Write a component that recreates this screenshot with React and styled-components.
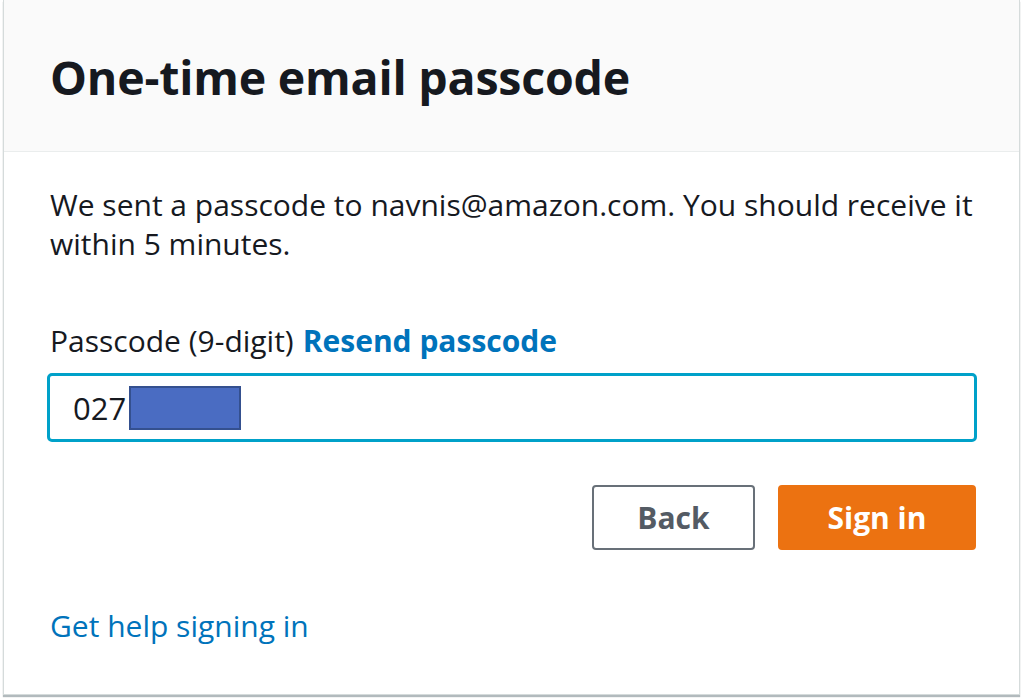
import React, { useState } from 'react';
import styled, { createGlobalStyle } from 'styled-components';

const GlobalStyle = createGlobalStyle`
  html, body {
    margin: 0;
    padding: 0;
    background: #ffffff;
  }
  body {
    font-family: "Open Sans", "Noto Sans", sans-serif;
    color: #16191f;
  }
`;

const Page = styled.div`
  width: 1022px;
  height: 699px;
  padding: 0 2px 0 3px;
  box-sizing: border-box;
  background: #fff;
`;

const Card = styled.div`
  height: 695px;
  box-sizing: border-box;
  border: 1px solid #d5dbdb;
  border-top: none;
  background: #fff;
  box-shadow: 0 2px 1px rgba(0, 28, 36, 0.3);
  display: flex;
  flex-direction: column;
`;

const Header = styled.div`
  height: 152px;
  box-sizing: border-box;
  background: #fafafa;
  border-bottom: 1px solid #eaeded;
  display: flex;
  align-items: center;
  padding: 2px 46px 0;
`;

const Title = styled.h1`
  margin: 0;
  font-size: 46.5px;
  font-weight: 700;
  letter-spacing: -0.2px;
  color: #16191f;
`;

const Body = styled.div`
  padding: 34px 42px 0 46px;
  display: flex;
  flex-direction: column;
`;

const Message = styled.p`
  margin: 0;
  font-size: 30px;
  line-height: 38.5px;
  color: #16191f;
`;

const LabelRow = styled.div`
  margin-top: 58px;
  font-size: 30px;
  line-height: 40px;
  display: flex;
  gap: 9px;
`;

const Link = styled.a`
  color: #0073bb;
  font-weight: ${(p) => (p.$bold ? 700 : 400)};
  text-decoration: none;
  cursor: pointer;
`;

const InputBox = styled.div`
  margin: 12px 0 0 -3px;
  height: 69px;
  box-sizing: border-box;
  border: 3px solid #00a1c9;
  border-radius: 5px;
  display: flex;
  align-items: center;
  padding: 0 23px;
`;

const Digits = styled.span`
  font-size: 31px;
  color: #16191f;
`;

const Redacted = styled.span`
  display: inline-block;
  width: 112px;
  height: 44px;
  margin-left: 3px;
  box-sizing: border-box;
  background: #4a6cc2;
  border: 2px solid #34508f;
`;

const Actions = styled.div`
  margin-top: 43px;
  padding-right: 1px;
  display: flex;
  justify-content: flex-end;
  gap: 23px;
`;

const Button = styled.button`
  height: 65px;
  width: ${(p) => p.$w}px;
  box-sizing: border-box;
  border-radius: 4px;
  font-family: inherit;
  font-size: 30px;
  font-weight: 700;
  cursor: pointer;
  border: 2px solid ${(p) => (p.$primary ? '#ec7211' : '#687078')};
  background: ${(p) => (p.$primary ? '#ec7211' : '#ffffff')};
  color: ${(p) => (p.$primary ? '#ffffff' : '#545b64')};
`;

const Footer = styled.div`
  margin-top: 56px;
  font-size: 30px;
  line-height: 40px;
`;

const App = () => {
  const [code] = useState('027');

  return (
    <Page>
      <GlobalStyle />
      <Card>
        <Header>
          <Title>One-time email passcode</Title>
        </Header>
        <Body>
          <Message>
            We sent a passcode to navnis@amazon.com. You should receive it within 5 minutes.
          </Message>
          <LabelRow>
            <span>Passcode (9-digit)</span>
            <Link $bold>Resend passcode</Link>
          </LabelRow>
          <InputBox>
            <Digits>{code}</Digits>
            <Redacted />
          </InputBox>
          <Actions>
            <Button $w={163}>Back</Button>
            <Button $w={198} $primary>Sign in</Button>
          </Actions>
          <Footer>
            <Link>Get help signing in</Link>
          </Footer>
        </Body>
      </Card>
    </Page>
  );
};

export default App;
